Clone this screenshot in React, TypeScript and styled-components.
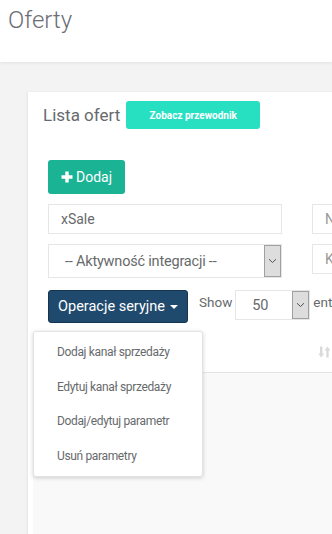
import React from "react";
import styled, { createGlobalStyle } from "styled-components";

const Global = createGlobalStyle`
  html, body { margin: 0; padding: 0; }
  body {
    font-family: Roboto, "Liberation Sans", sans-serif;
    background: #f3f3f4;
    color: #676a6c;
    overflow: hidden;
    width: 332px;
    height: 534px;
  }
  #root { width: 332px; }
`;

const Page = styled.div`
  width: 332px;
  height: 534px;
  overflow: hidden;
  display: flex;
  flex-direction: column;
`;

const Header = styled.header`
  height: 62px;
  background: #fff;
  box-shadow: 0 1px 3px rgba(0, 0, 0, 0.08);
  padding: 4px 0 0 8px;
  box-sizing: border-box;
  flex: none;
`;

const Title = styled.h1`
  margin: 0;
  font-size: 24px;
  font-weight: 300;
  color: #6b6e75;
  line-height: 32px;
`;

const Body = styled.div`
  padding: 30px 0 0 28px;
  flex: 1;
`;

const Card = styled.section`
  width: 600px;
  height: 460px;
  background: #fff;
  box-shadow: -1px 0 2px rgba(0, 0, 0, 0.06);
  display: flex;
  flex-direction: column;
`;

const CardTitle = styled.div`
  display: flex;
  align-items: center;
  gap: 6px;
  padding: 9px 15px 0 15px;
  height: 28px;
`;

const CardHeading = styled.h5`
  margin: 0;
  font-size: 17px;
  font-weight: 400;
  color: #676a6c;
`;

const GuideButton = styled.button`
  width: 134px;
  height: 28px;
  border: none;
  border-radius: 3px;
  background: #27dfc1;
  color: #fff;
  font-family: Roboto, "Liberation Sans", sans-serif;
  font-weight: 700;
  font-size: 10px;
  padding: 0;
`;

const Content = styled.div`
  padding: 31px 0 0 20px;
  display: flex;
  flex-direction: column;
  position: relative;
`;

const AddButton = styled.button`
  align-self: flex-start;
  width: 77px;
  height: 34px;
  border: none;
  border-radius: 3px;
  background: #1ab394;
  color: #fff;
  font-family: Roboto, "Liberation Sans", sans-serif;
  font-size: 14px;
  display: flex;
  align-items: center;
  justify-content: center;
  gap: 3px;
  padding: 0;
`;

const FilterGrid = styled.div`
  display: grid;
  grid-template-columns: 234px 234px;
  column-gap: 30px;
  row-gap: 10px;
  margin-top: 10px;
`;

const TextInput = styled.div<{ $h?: number }>`
  height: ${(p) => p.$h ?? 30}px;
  border: 1px solid #e5e6e7;
  box-sizing: border-box;
  display: flex;
  align-items: center;
  padding-left: 12px;
  font-size: 14px;
  color: #676a6c;
  background: #fff;
`;

const Placeholder = styled.span`
  color: #999;
`;

const SelectBox = styled.div<{ $w: number; $h: number }>`
  width: ${(p) => p.$w}px;
  height: ${(p) => p.$h}px;
  border: 1px solid #e5e6e7;
  box-sizing: border-box;
  display: flex;
  align-items: stretch;
  background: #fff;
`;

const SelectText = styled.div<{ $pad: number }>`
  flex: 1;
  display: flex;
  align-items: center;
  padding-left: ${(p) => p.$pad}px;
  font-size: 14.5px;
  letter-spacing: -0.2px;
  color: #676a6c;
`;

const SelectArrow = styled.div`
  width: 17px;
  background: #dddddd;
  border: 1px solid #a0a0a0;
  box-sizing: border-box;
  display: flex;
  align-items: center;
  justify-content: center;
`;

const ActionsRow = styled.div`
  display: flex;
  align-items: flex-start;
  margin-top: 12px;
  gap: 11px;
`;

const BulkButton = styled.button`
  width: 140px;
  height: 33px;
  border: 1px solid #14344f;
  border-radius: 3px;
  background: #1f4a6e;
  color: #fff;
  font-family: Roboto, "Liberation Sans", sans-serif;
  font-size: 14.5px;
  display: flex;
  align-items: center;
  justify-content: center;
  gap: 5px;
  padding: 0;
`;

const Caret = styled.span`
  width: 0;
  height: 0;
  border-left: 4px solid transparent;
  border-right: 4px solid transparent;
  border-top: 4px solid #fff;
  margin-top: 1px;
`;

const LengthLabel = styled.div`
  display: flex;
  align-items: flex-start;
  gap: 3px;
  font-size: 13.5px;
  color: #676a6c;
  padding-top: 4px;
`;

const LengthSelectWrap = styled.div`
  margin-top: -4px;
`;

const TableArea = styled.div`
  margin: 8px 0 0 -15px;
  display: flex;
  flex-direction: column;
`;

const TableHead = styled.div`
  height: 42px;
  border-bottom: 1px solid #e3e3e3;
  display: flex;
  align-items: center;
  padding-left: 285px;
  box-sizing: border-box;
  background: #fff;
`;

const TableBody = styled.div`
  height: 200px;
  background: #f9f9f9;
`;

const Menu = styled.ul`
  position: absolute;
  left: 5px;
  top: 202px;
  width: 170px;
  margin: 0;
  padding: 3px 0;
  list-style: none;
  background: #fff;
  border: 1px solid #e3e3e6;
  border-radius: 3px;
  box-shadow: 0 1px 4px rgba(0, 0, 0, 0.18);
  box-sizing: border-box;
  z-index: 5;
`;

const MenuItem = styled.li`
  height: 34.5px;
  display: flex;
  align-items: center;
  padding-left: 23px;
  font-size: 12px;
  letter-spacing: -0.35px;
  color: #676a6c;
`;

const Chevron = () => (
  <svg width="9" height="6" viewBox="0 0 9 6">
    <path d="M1 1.2 L4.5 4.5 L8 1.2" fill="none" stroke="#444" strokeWidth="0.9" />
  </svg>
);

const Plus = () => (
  <svg width="12" height="12" viewBox="0 0 12 12">
    <path d="M4.3 0.5h3.4v3.8h3.8v3.4H7.7v3.8H4.3V7.7H0.5V4.3h3.8z" fill="#fff" />
  </svg>
);

const SortIcon = () => (
  <svg width="13" height="12" viewBox="0 0 13 12">
    <g fill="#dadada">
      <rect x="2" y="0.5" width="2.4" height="8" />
      <path d="M0.3 7.5h5.8L3.2 11.5z" />
      <rect x="8.3" y="3.5" width="2.4" height="8" />
      <path d="M6.6 4.5h5.8L9.5 0.5z" />
    </g>
  </svg>
);

export default function App() {
  return (
    <Page>
      <Global />
      <Header>
        <Title>Oferty</Title>
      </Header>
      <Body>
        <Card>
          <CardTitle>
            <CardHeading>Lista ofert</CardHeading>
            <GuideButton>Zobacz przewodnik</GuideButton>
          </CardTitle>
          <Content>
            <AddButton>
              <Plus />
              Dodaj
            </AddButton>
            <FilterGrid>
              <TextInput>xSale</TextInput>
              <TextInput>
                <Placeholder>Nazwa</Placeholder>
              </TextInput>
              <SelectBox $w={234} $h={34}>
                <SelectText $pad={16}>-- Aktywność integracji --</SelectText>
                <SelectArrow>
                  <Chevron />
                </SelectArrow>
              </SelectBox>
              <TextInput $h={30}>
                <Placeholder>Kategoria</Placeholder>
              </TextInput>
            </FilterGrid>
            <ActionsRow>
              <BulkButton>
                Operacje seryjne
                <Caret />
              </BulkButton>
              <LengthLabel>
                Show
                <LengthSelectWrap>
                  <SelectBox $w={75} $h={30}>
                    <SelectText $pad={16}>50</SelectText>
                    <SelectArrow>
                      <Chevron />
                    </SelectArrow>
                  </SelectBox>
                </LengthSelectWrap>
                entries
              </LengthLabel>
            </ActionsRow>
            <TableArea>
              <TableHead>
                <SortIcon />
              </TableHead>
              <TableBody />
            </TableArea>
            <Menu>
              <MenuItem>Dodaj kanał sprzedaży</MenuItem>
              <MenuItem>Edytuj kanał sprzedaży</MenuItem>
              <MenuItem>Dodaj/edytuj parametr</MenuItem>
              <MenuItem>Usuń parametry</MenuItem>
            </Menu>
          </Content>
        </Card>
      </Body>
    </Page>
  );
}
